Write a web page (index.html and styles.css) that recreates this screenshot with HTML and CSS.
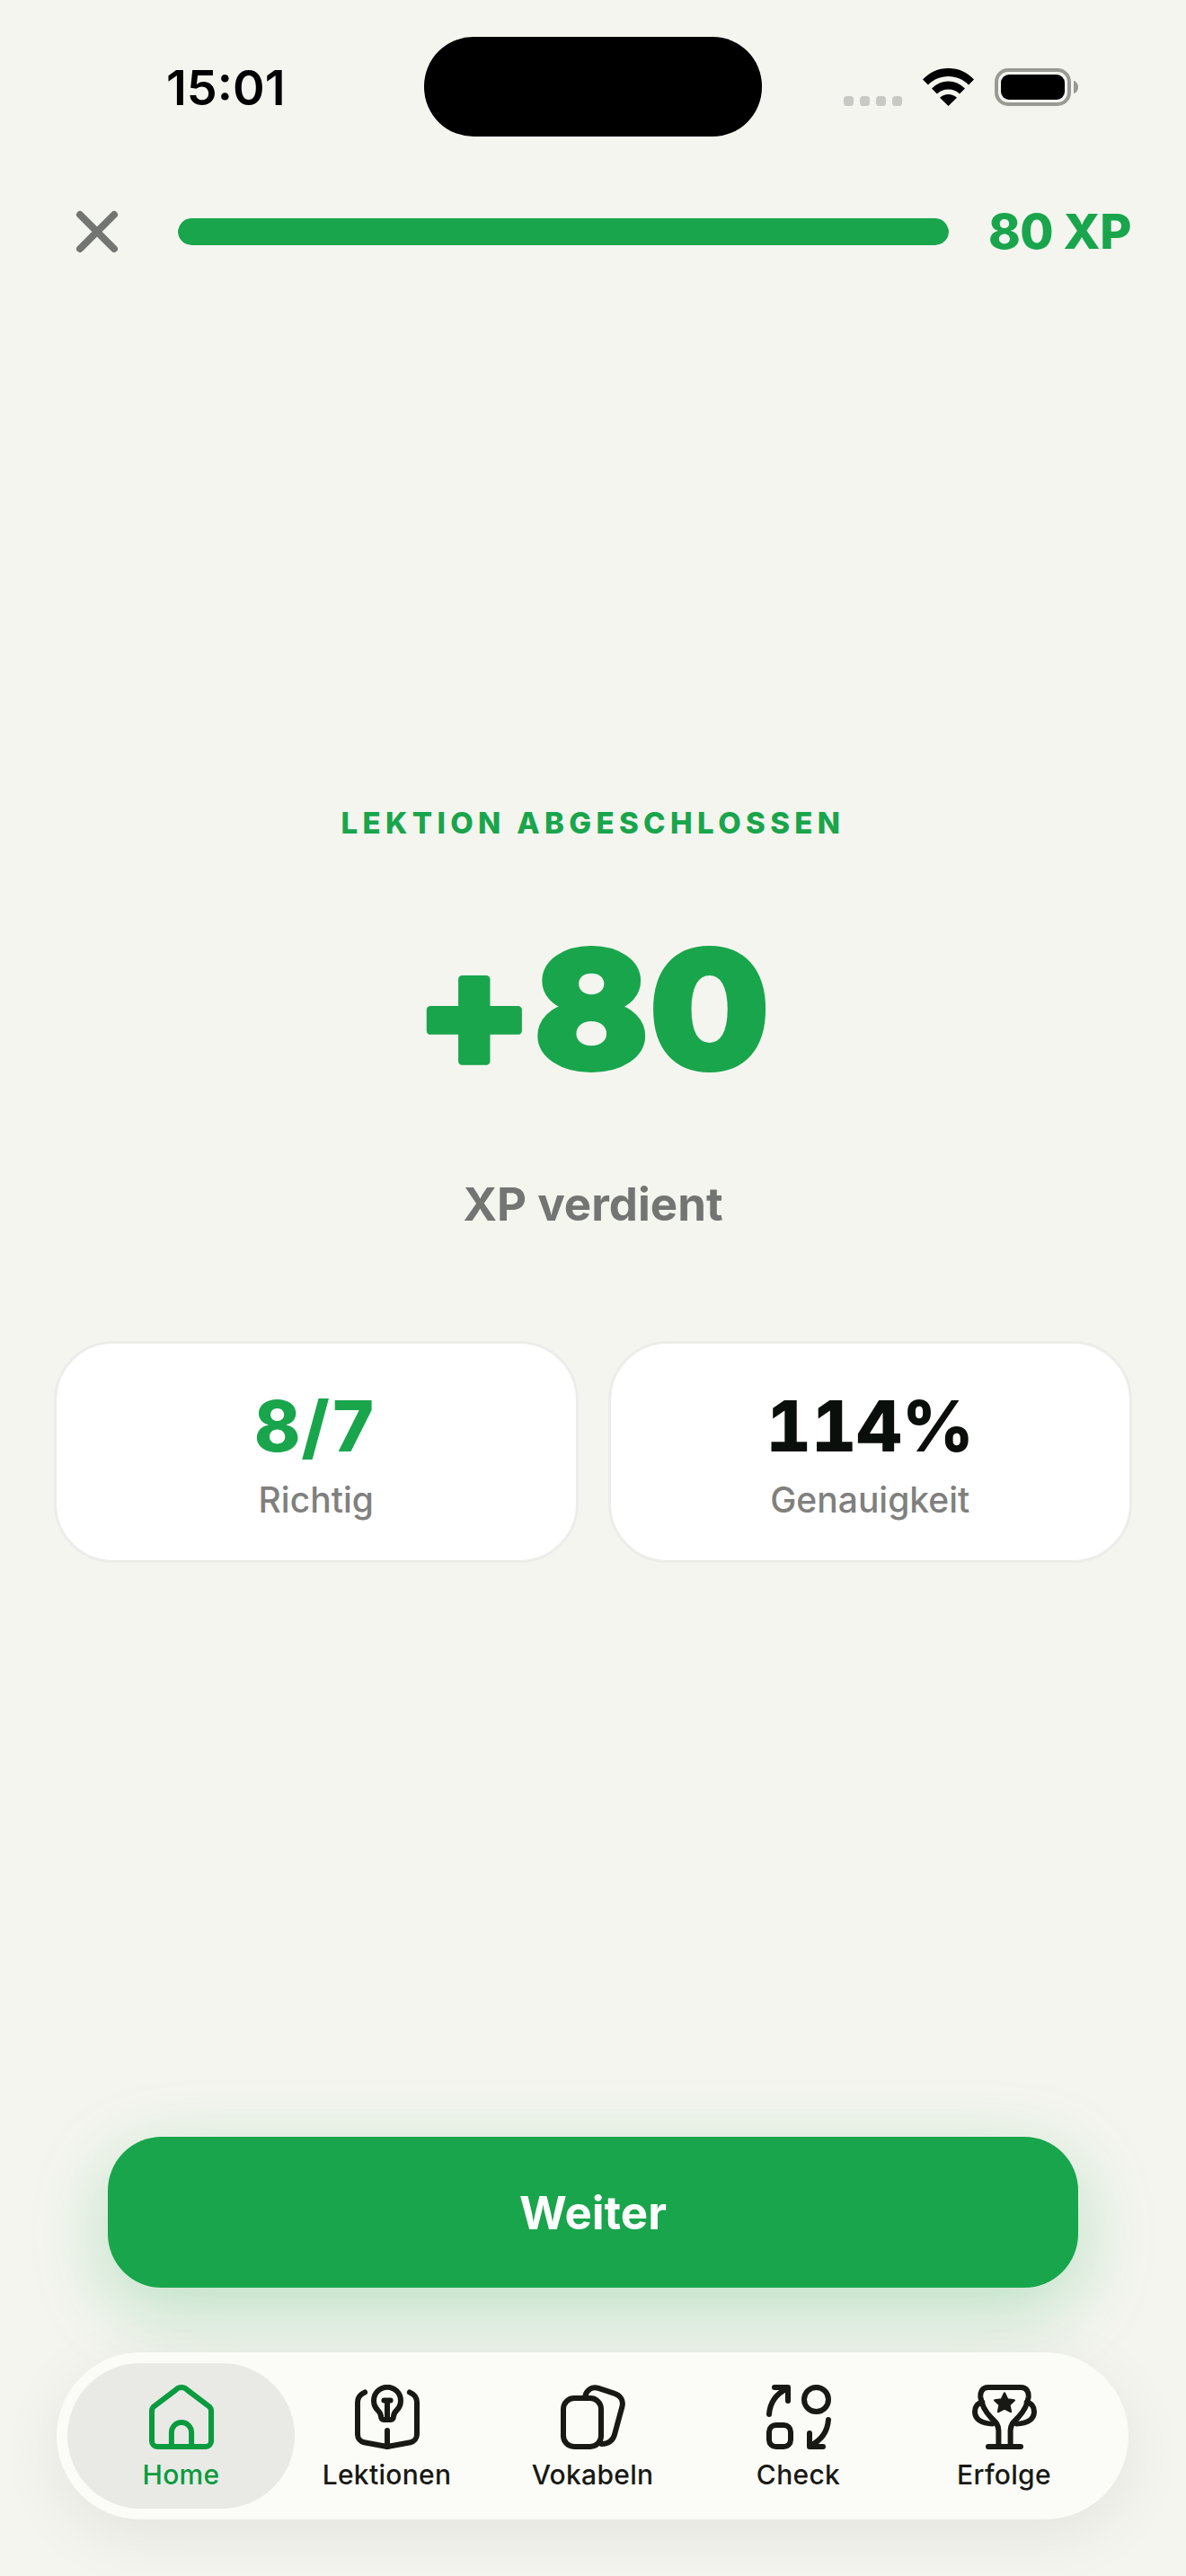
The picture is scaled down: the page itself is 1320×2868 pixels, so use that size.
FILE: index.html
```html
<!DOCTYPE html>
<html lang="de">
<head>
<meta charset="utf-8">
<title>Lektion abgeschlossen</title>
<link rel="stylesheet" href="styles.css">
</head>
<body>
<div class="screen">
  <div class="status">
    <div class="time">15:01</div>
    <div class="island"></div>
    <div class="sys">
      <div class="signal"><i></i><i></i><i></i><i></i></div>
      <svg class="wifi" viewBox="0 0 57 42"><path d="M28.5 0C40 0 49.5 4.500 57 12.500L51 18.500C45 12.500 37.500 9 28.500 9S12 12.500 6 18.500L0 12.500C7.500 4.500 17 0 28.500 0Z"/><path d="M28.500 14.500C35.500 14.500 41.500 17.200 47 22.500L41 28.500C37.500 25 33.500 23.500 28.500 23.500S19.500 25 16 28.500L10 22.500C15.500 17.200 21.500 14.500 28.500 14.500Z"/><path d="M28.500 29C32 29 35 30.200 38 32.800L28.500 42L19 32.800C22 30.200 25 29 28.500 29Z"/></svg>
      <svg class="battery" viewBox="0 0 93 42"><rect x="2" y="2" width="81" height="38" rx="13" fill="none" stroke="#999a94" stroke-width="4"/><rect x="7" y="7" width="71" height="28" rx="9" fill="#000"/><path d="M88 14c3 .5 5 3.500 5 7s-2 6.500-5 7Z" fill="#999a94"/></svg>
    </div>
  </div>

  <div class="topbar">
    <svg class="close" viewBox="0 0 48 48"><path d="M5 5 43 43M43 5 5 43"/></svg>
    <div class="track"><div class="fill"></div></div>
    <div class="xp">80 XP</div>
  </div>

  <main class="result">
    <div class="eyebrow">LEKTION ABGESCHLOSSEN</div>
    <svg class="score" viewBox="0 0 440 226"><text x="220" y="177">+80</text></svg>
    <div class="earned">XP verdient</div>
    <div class="cards">
      <div class="card"><div class="value green">8/7</div><div class="caption">Richtig</div></div>
      <div class="card"><div class="value">114%</div><div class="caption">Genauigkeit</div></div>
    </div>
  </main>

  <button class="next">Weiter</button>

  <nav class="tabs">
    <a class="tab active">
      <svg class="icon" viewBox="0 0 24 24"><path d="M3 23H21a2 2 0 0 0 2-2V9.600a2 2 0 0 0-.5-1.300L14.200 2a3 3 0 0 0-4.400 0L1.500 8.300A2 2 0 0 0 1 9.600V21a2 2 0 0 0 2 2Z"/><path d="M8.300 23v-5.300a3.700 3.700 0 0 1 7.400 0V23"/></svg>
      <span>Home</span>
    </a>
    <a class="tab">
      <svg class="icon" viewBox="0 0 24 24"><path d="M8.500 9.500a5 5 0 1 1 7 0c-.7.7-1.200 1.300-1.200 2.500 0 .6-.4 1-1 1h-2.600c-.6 0-1-.4-1-1 0-1.200-.5-1.800-1.200-2.500Z"/><path d="M10.800 5.800h2.400M12 5.800V12"/><path d="M3.700 2.800C2 3.500 1 4.800 1 6.500V18.500a3 3 0 0 0 2.400 2.900L12 23l8.600-1.600A3 3 0 0 0 23 18.500V6.500c0-1.700-1-3-2.700-3.700"/><path d="M12 17v6"/></svg>
      <span>Lektionen</span>
    </a>
    <a class="tab">
      <svg class="icon" viewBox="0 0 24 24"><rect x="1" y="5" width="14" height="18" rx="4"/><path d="M9 4.500C9.600 2 11.500.6 14 1.300l5.800 1.900c2.400.8 3.600 2.700 3 5L20 18.500c-.6 2.200-2.200 3.400-4.800 3.500"/></svg>
      <span>Vokabeln</span>
    </a>
    <a class="tab">
      <svg class="icon" viewBox="0 0 24 24"><path d="M1 11C1.300 7 3.500 3.500 7.500 1.500M3 1H8V6"/><circle cx="18.500" cy="5.500" r="4.500"/><rect x="1" y="15" width="8" height="8" rx="2.500"/><path d="M23 13c-.3 4-2.500 7.500-6.500 9.500M16 18V23H21"/></svg>
      <span>Check</span>
    </a>
    <a class="tab">
      <svg class="icon" viewBox="0 0 24 24"><path d="M9.800 23V17C9.800 14.500 8.200 13.500 7 12.200C5.200 10.300 3.500 8 3.100 4.500C3 3 3.500 1 6 1H18C20.500 1 21 3 20.900 4.500C20.500 8 18.800 10.300 17 12.200C15.800 13.500 14.200 14.500 14.200 17V23"/><path d="M3.800 6.500C2 6.800 1 8.300 1 10c0 2.800 2.500 4.500 6.500 4.500M20.200 6.500C22 6.800 23 8.300 23 10c0 2.800-2.500 4.500-6.500 4.500M6 23H18"/><path class="star" d="M12 3.200l1.100 2.300 2.500.3-1.800 1.700.5 2.500-2.300-1.200-2.300 1.200.5-2.500-1.800-1.700 2.500-.3Z"/></svg>
      <span>Erfolge</span>
    </a>
  </nav>
</div>
</body>
</html>
```
FILE: styles.css
```css
* { box-sizing: border-box; }
html, body { margin: 0; padding: 0; }
body { background: #f4f5ef; font-family: Inter, "Liberation Sans", sans-serif; }

.screen { width: 1320px; height: 2868px; display: flex; flex-direction: column; overflow: hidden; }

.status { display: flex; align-items: center; height: 111px; margin-top: 41px; padding-left: 185px; }
.time { width: 287px; font-size: 54px; font-weight: 600; color: #000; line-height: 1; margin-top: 2px; }
.island { width: 376px; height: 111px; border-radius: 55px; background: #000; }
.sys { display: flex; align-items: flex-end; margin-left: 91px; height: 42px; }
.signal { display: flex; gap: 7px; }
.signal i { display: block; width: 11px; height: 11px; border-radius: 3.500px; background: #c8c9c4; }
.wifi { width: 57px; height: 42px; margin-left: 23px; display: block; }
.battery { width: 93px; height: 42px; margin-left: 23px; display: block; }

.topbar { display: flex; align-items: center; height: 60px; margin-top: 76px; padding-left: 84px; }
.close { width: 48px; height: 48px; flex: none; }
.close path { fill: none; stroke: #737573; stroke-width: 8; stroke-linecap: round; }
.track { flex: none; width: 858px; height: 30px; margin-left: 66px; border-radius: 15px; background: #e7e8e3; overflow: hidden; }
.fill { width: 100%; height: 100%; border-radius: 15px; background: #19a54c; }
.xp { margin-left: 44px; font-size: 54px; font-weight: 800; color: #19a54c; line-height: 60px; white-space: nowrap; letter-spacing: -.5px; }

.result { flex: 1; display: flex; flex-direction: column; align-items: center; padding: 0 60px; min-height: 0; }
.eyebrow { margin-top: 604px; font-size: 33px; font-weight: 800; line-height: 48px; letter-spacing: 5.350px; color: #19a54c; }
.score { display: block; flex: none; width: 440px; height: 226px; margin-top: 71px; }
.score text { font-size: 178px; font-weight: 800; letter-spacing: 2px; text-anchor: middle; fill: #19a54c; stroke: #19a54c; stroke-width: 8; stroke-linejoin: round; transform: scaleX(1.07); transform-origin: 220px 113px; }
.earned { margin-top: 73px; font-size: 51px; font-weight: 700; line-height: 62px; color: #737573; }
.cards { display: grid; grid-template-columns: 1fr 1fr; gap: 33px; width: 100%; margin-top: 121px; }
.card { height: 247px; padding-top: 45px; border: 3px solid #ececea; border-radius: 66px; background: #fff; text-align: center; }
.value { font-size: 78px; font-weight: 800; line-height: 94px; color: #0b0f0b; font-variant-numeric: tabular-nums; }
.value.green { color: #19a54c; letter-spacing: 1.500px; }
.caption { margin-top: 11px; font-size: 39px; font-weight: 500; line-height: 48px; color: #7f807e; }

.next { display: block; width: 1080px; height: 168px; margin: 0 auto; flex: none; border: 0; border-radius: 60px; background: #19a54c; color: #fff; font: 700 51px Inter, "Liberation Sans", sans-serif; box-shadow: 0 24px 84px rgba(25,165,76,.26); }

.tabs { position: relative; display: grid; grid-template-columns: repeat(5, 1fr); flex: none; width: 1193px; height: 186px; margin: 72px 0 63px 63px; padding: 12px 24px; border-radius: 93px; background: #fbfcf8; box-shadow: 0 18px 72px rgba(0,0,0,.07); }
.tab { display: flex; flex-direction: column; align-items: center; padding-top: 24px; border-radius: 81px; color: #181915; }
.tab span { margin-top: 9px; font-size: 30px; font-weight: 500; line-height: 38px; letter-spacing: .3px; white-space: nowrap; }
.tab.active { margin: 0 -12px; background: #e9eae6; color: #0a9b3f; }
.icon { display: block; width: 72px; height: 72px; fill: none; stroke: currentColor; stroke-width: 2; stroke-linecap: round; stroke-linejoin: round; }
.icon .star { fill: currentColor; stroke-width: .8; }
```
